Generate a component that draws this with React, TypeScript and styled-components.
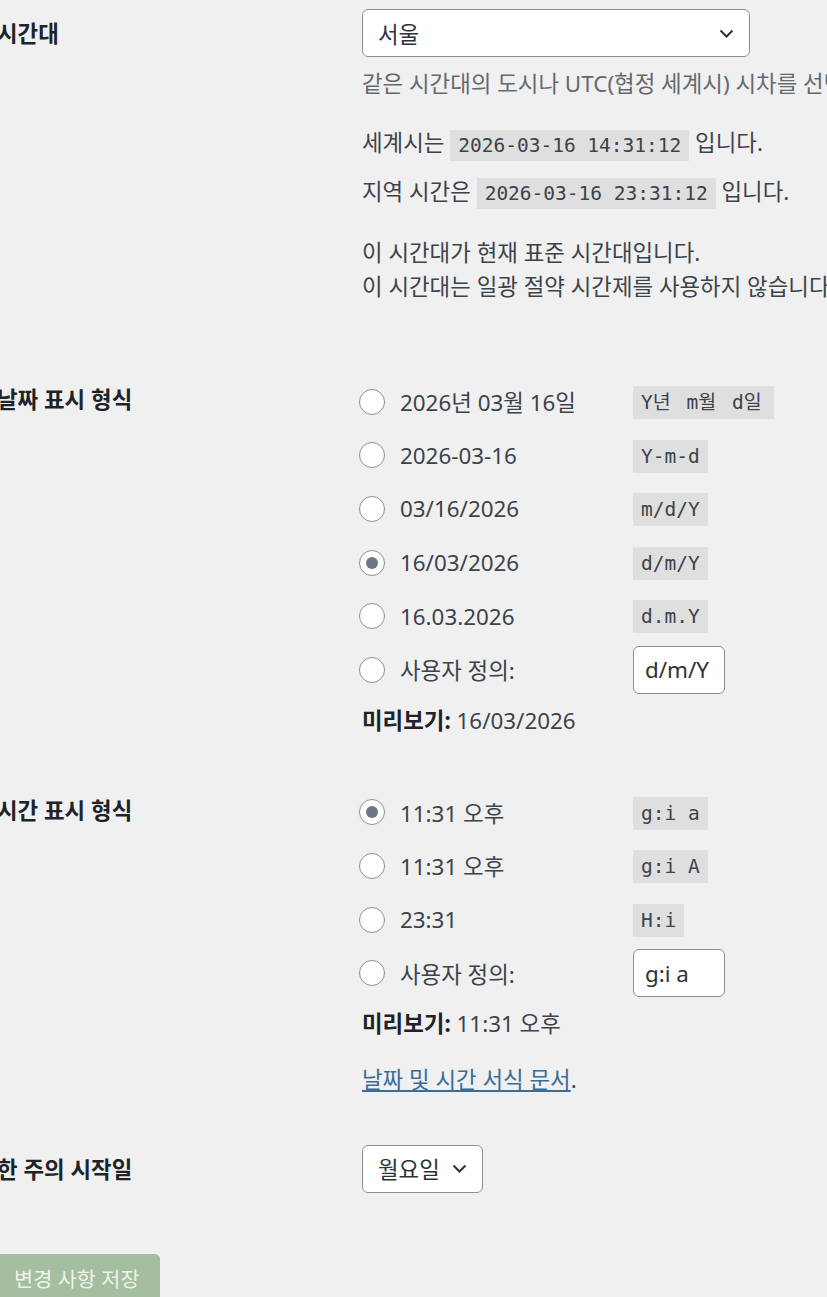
import styled, { createGlobalStyle } from "styled-components"

const GlobalStyle = createGlobalStyle`
  html, body {
    margin: 0;
    padding: 0;
    background: #f0f0f1;
    overflow: hidden;
  }
  body {
    font-family: "Noto Sans", "Noto Sans CJK KR", sans-serif;
    font-size: 22.4px;
    color: #3c434a;
  }
`

const Page = styled.div`
  width: 830px;
  margin: -15px 0 0 -3px;
`

const Row = styled.div`
  display: grid;
  grid-template-columns: 365px 1fr;
  padding: 24px 0;
`

const Label = styled.div`
  font-weight: 700;
  color: #1d2327;
  line-height: 50px;
  white-space: nowrap;
`

const Field = styled.div`
  min-width: 0;
  white-space: nowrap;
`

const Select = styled.div<{ $width?: number }>`
  box-sizing: border-box;
  width: ${p => (p.$width ? `${p.$width}px` : "auto")};
  height: 48px;
  display: inline-flex;
  align-items: center;
  justify-content: space-between;
  gap: 12px;
  padding: 0 15px 0 15px;
  background: #fff;
  border: 1px solid #8c8f94;
  border-radius: 6px;
  color: #2c3338;
`

const Text = styled.p<{ $space: number; $bottom?: number }>`
  margin: ${p => p.$space}px 0 ${p => p.$bottom ?? 0}px;
  line-height: 34px;
`

const Description = styled(Text)`
  color: #646970;
`

const Code = styled.code<{ $pad: number }>`
  display: inline-block;
  font-family: "DejaVu Sans Mono", "Noto Sans CJK KR", monospace;
  font-size: 19.5px;
  line-height: 23px;
  padding: ${p => p.$pad}px 8px;
  background: rgba(0, 0, 0, 0.07);
  color: #3c434a;
  vertical-align: middle;
`

// hangul inside code takes two monospace cells
const WideGlyph = styled.span`
  letter-spacing: 4px;
`

const Option = styled.label`
  display: grid;
  grid-template-columns: 38px 233px auto;
  align-items: center;
  height: 53.6px;
`

const Radio = styled.input.attrs({ type: "radio" })`
  appearance: none;
  box-sizing: border-box;
  width: 26px;
  height: 26px;
  margin: 0 0 0 -3px;
  border: 1px solid #8c8f94;
  border-radius: 50%;
  background: #fff;
  display: grid;
  place-items: center;

  &:checked::before {
    content: "";
    width: 12px;
    height: 12px;
    border-radius: 50%;
    background: #6c7884;
  }
`

const FormatInput = styled.input`
  box-sizing: border-box;
  width: 92px;
  height: 48px;
  padding: 0 11px;
  border: 1px solid #8c8f94;
  border-radius: 6px;
  background: #fff;
  font: inherit;
  color: #2c3338;
`

const Strong = styled.strong`
  color: #1d2327;
`

const DocLink = styled.a`
  color: #3a6d98;
  text-decoration: underline;
`

const Submit = styled.p`
  margin: 35px 0 0 -3px;
`

const SaveButton = styled.button`
  height: 48px;
  padding: 0 19px;
  border: 1px solid #a6bea0;
  border-radius: 5px;
  background: #a6bea0;
  color: #edf3ea;
  font: inherit;
  font-size: 20.8px;
`

const Chevron = () => (
  <svg width="15" height="9" viewBox="0 0 15 9">
    <polyline points="1.5,1.5 7.5,7.5 13.5,1.5" fill="none" stroke="#2c3338" strokeWidth="2" />
  </svg>
)

const FormatCode = ({ value }: { value: string }) => (
  <Code $pad={5}>
    {value.split(/([가-힣])/).map((part, i) =>
      /[가-힣]/.test(part) ? <WideGlyph key={i}>{part}</WideGlyph> : part
    )}
  </Code>
)

const dateFormats = [
  { text: "2026년 03월 16일", code: "Y년 m월 d일" },
  { text: "2026-03-16", code: "Y-m-d" },
  { text: "03/16/2026", code: "m/d/Y" },
  { text: "16/03/2026", code: "d/m/Y", checked: true },
  { text: "16.03.2026", code: "d.m.Y" },
]

const timeFormats = [
  { text: "11:31 오후", code: "g:i a", checked: true },
  { text: "11:31 오후", code: "g:i A" },
  { text: "23:31", code: "H:i" },
]

type Format = { text: string; code: string; checked?: boolean }

const FormatChoices = ({ name, formats, custom, preview }: { name: string; formats: Format[]; custom: string; preview: string }) => (
  <Field>
    {formats.map(f => (
      <Option key={f.code}>
        <Radio name={name} defaultChecked={f.checked} />
        <span>{f.text}</span>
        <span><FormatCode value={f.code} /></span>
      </Option>
    ))}
    <Option>
      <Radio name={name} />
      <span>사용자 정의:</span>
      <span><FormatInput defaultValue={custom} /></span>
    </Option>
    <Text $space={7}>
      <Strong>미리보기:</Strong> {preview}
    </Text>
  </Field>
)

export default function App() {
  return (
    <Page>
      <GlobalStyle />
      <Row>
        <Label>시간대</Label>
        <Field>
          <Select $width={388}>
            <span>서울</span>
            <Chevron />
          </Select>
          <Description $space={10}>같은 시간대의 도시나 UTC(협정 세계시) 시차를 선택하세요.</Description>
          <Text $space={25}>
            세계시는 <Code $pad={4}>2026-03-16 14:31:12</Code> 입니다.
          </Text>
          <Text $space={14}>
            지역 시간은 <Code $pad={4}>2026-03-16 23:31:12</Code> 입니다.
          </Text>
          <Text $space={27} $bottom={23}>
            이 시간대가 현재 표준 시간대입니다.
            <br />
            이 시간대는 일광 절약 시간제를 사용하지 않습니다.
          </Text>
        </Field>
      </Row>
      <Row>
        <Label>날짜 표시 형식</Label>
        <FormatChoices name="date_format" formats={dateFormats} custom="d/m/Y" preview="16/03/2026" />
      </Row>
      <Row>
        <Label>시간 표시 형식</Label>
        <Field>
          <FormatChoices name="time_format" formats={timeFormats} custom="g:i a" preview="11:31 오후" />
          <Text $space={22}>
            <DocLink href="#">날짜 및 시간 서식 문서</DocLink>.
          </Text>
        </Field>
      </Row>
      <Row>
        <Label>한 주의 시작일</Label>
        <Field>
          <Select>
            <span>월요일</span>
            <Chevron />
          </Select>
        </Field>
      </Row>
      <Submit>
        <SaveButton type="button">변경 사항 저장</SaveButton>
      </Submit>
    </Page>
  )
}
